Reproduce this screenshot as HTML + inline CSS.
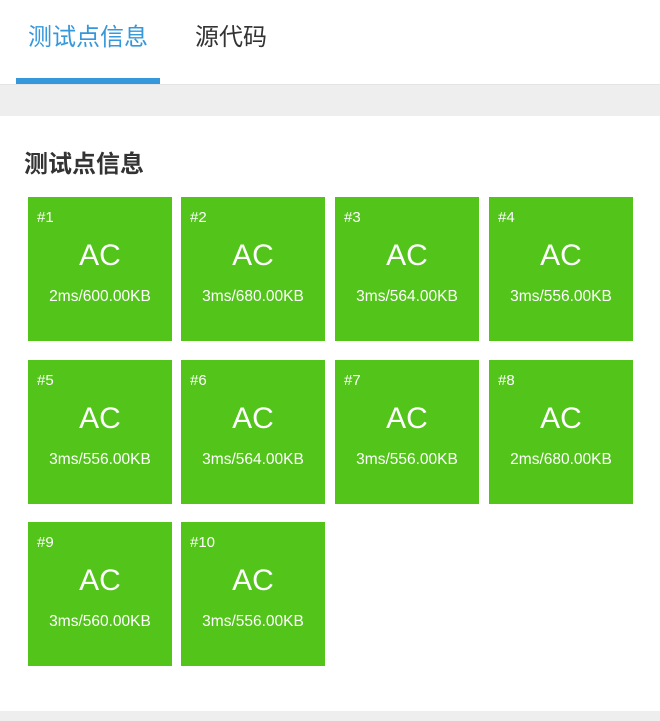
<!DOCTYPE html><html><head><meta charset="utf-8"><style>
body{margin:0;width:660px;height:721px;background:#fff;font-family:"Liberation Sans","Noto Sans CJK SC",sans-serif;position:relative;overflow:hidden}
.tab{position:absolute;top:20px;font-size:24px;line-height:36px}
.ul{position:absolute;left:16px;top:78px;width:144px;height:6px;background:#3498db}
.band{position:absolute;left:0;top:84px;width:660px;height:31px;background:#eee;border-top:1px solid #e4e4e4}
h2{position:absolute;left:24px;top:148px;margin:0;font-size:24px;line-height:34px;color:#333;font-weight:bold}
.b{position:absolute;width:144px;height:144px;background:#52c41a;color:#fff}
.b .n{position:absolute;left:9px;top:12px;font-size:15px}
.b .a{position:absolute;left:0;width:144px;top:42px;text-align:center;font-size:30px}
.b .m{position:absolute;left:0;width:144px;top:91px;text-align:center;font-size:15.5px}
.bot{position:absolute;left:0;top:711px;width:660px;height:10px;background:#eee}
</style></head><body>
<div class="tab" style="left:28px;color:#3498db">测试点信息</div>
<div class="tab" style="left:195px;color:#333">源代码</div>
<div class="ul"></div><div class="band"></div>
<h2>测试点信息</h2>
<div class="b" style="left:28px;top:197px"><div class="n">#1</div><div class="a">AC</div><div class="m">2ms/600.00KB</div></div>
<div class="b" style="left:181px;top:197px"><div class="n">#2</div><div class="a">AC</div><div class="m">3ms/680.00KB</div></div>
<div class="b" style="left:335px;top:197px"><div class="n">#3</div><div class="a">AC</div><div class="m">3ms/564.00KB</div></div>
<div class="b" style="left:489px;top:197px"><div class="n">#4</div><div class="a">AC</div><div class="m">3ms/556.00KB</div></div>
<div class="b" style="left:28px;top:360px"><div class="n">#5</div><div class="a">AC</div><div class="m">3ms/556.00KB</div></div>
<div class="b" style="left:181px;top:360px"><div class="n">#6</div><div class="a">AC</div><div class="m">3ms/564.00KB</div></div>
<div class="b" style="left:335px;top:360px"><div class="n">#7</div><div class="a">AC</div><div class="m">3ms/556.00KB</div></div>
<div class="b" style="left:489px;top:360px"><div class="n">#8</div><div class="a">AC</div><div class="m">2ms/680.00KB</div></div>
<div class="b" style="left:28px;top:522px"><div class="n">#9</div><div class="a">AC</div><div class="m">3ms/560.00KB</div></div>
<div class="b" style="left:181px;top:522px"><div class="n">#10</div><div class="a">AC</div><div class="m">3ms/556.00KB</div></div>
<div class="bot"></div>
</body></html>
